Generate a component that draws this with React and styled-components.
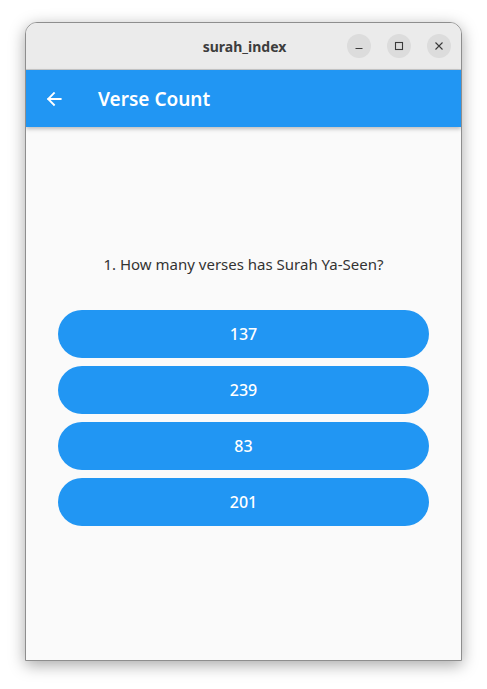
import styled, { createGlobalStyle } from "styled-components";

const GlobalStyle = createGlobalStyle`
  html, body {
    margin: 0;
    padding: 0;
    background: #ffffff;
    font-family: "Noto Sans", "Open Sans", sans-serif;
  }
`;

const answers = ["137", "239", "83", "201"];

function WindowButton({ kind }) {
  return (
    <CircleButton>
      <svg width="10" height="10" viewBox="0 0 10 10" fill="none" stroke="#3a3a3a" strokeWidth="1.1">
        {kind === "min" && <path d="M1.5 7.5h7" />}
        {kind === "max" && <rect x="1.5" y="1.5" width="7" height="7" />}
        {kind === "close" && <path d="M1.5 1.5l7 7M8.5 1.5l-7 7" />}
      </svg>
    </CircleButton>
  );
}

function App() {
  return (
    <>
      <GlobalStyle />
      <Page>
        <Window>
          <TitleBar>
            <WindowTitle>surah_index</WindowTitle>
            <Controls>
              <WindowButton kind="min" />
              <WindowButton kind="max" />
              <WindowButton kind="close" />
            </Controls>
          </TitleBar>
          <AppBar>
            <BackButton>
              <svg width="20" height="20" viewBox="0 0 24 24" fill="none" stroke="#fff" strokeWidth="2.2" strokeLinecap="square">
                <path d="M20 12H5M12 5l-7 7 7 7" />
              </svg>
            </BackButton>
            <AppTitle>Verse Count</AppTitle>
          </AppBar>
          <Body>
            <Question>1. How many verses has Surah Ya-Seen?</Question>
            <Answers>
              {answers.map((a) => (
                <AnswerButton key={a}>{a}</AnswerButton>
              ))}
            </Answers>
          </Body>
        </Window>
      </Page>
    </>
  );
}

const Page = styled.div`
  width: 487px;
  height: 689px;
  padding: 22px 0 0 25px;
  box-sizing: border-box;
`;

const Window = styled.div`
  width: 437px;
  height: 639px;
  box-sizing: border-box;
  border: 1px solid #8e8e8e;
  border-radius: 12px 12px 0 0;
  overflow: hidden;
  display: flex;
  flex-direction: column;
  background: #fafafa;
  box-shadow: 0 4px 16px rgba(0, 0, 0, 0.35);
`;

const TitleBar = styled.div`
  height: 46px;
  flex-shrink: 0;
  background: #ebebeb;
  position: relative;
  display: flex;
  align-items: center;
  justify-content: center;
  border-bottom: 1px solid #c8c8c8;
`;

const WindowTitle = styled.div`
  font-family: "Noto Sans", sans-serif;
  font-weight: 700;
  font-size: 14px;
  color: #3d3d3d;
  margin-left: 2px;
`;

const Controls = styled.div`
  position: absolute;
  right: 10px;
  top: 11px;
  display: flex;
  gap: 16px;
`;

const CircleButton = styled.div`
  width: 24px;
  height: 24px;
  border-radius: 50%;
  background: #dcdcdc;
  display: flex;
  align-items: center;
  justify-content: center;
`;

const AppBar = styled.div`
  height: 57px;
  flex-shrink: 0;
  background: #2196f3;
  display: flex;
  align-items: center;
  padding-left: 18px;
  box-shadow: 0 2px 4px rgba(0, 0, 0, 0.25);
  position: relative;
  z-index: 1;
`;

const BackButton = styled.div`
  width: 20px;
  height: 20px;
  display: flex;
  align-items: center;
  justify-content: center;
`;

const AppTitle = styled.div`
  margin-left: 34px;
  color: #ffffff;
  font-size: 19px;
  font-weight: 600;
`;

const Body = styled.div`
  flex: 1;
  display: flex;
  flex-direction: column;
  align-items: center;
  justify-content: center;
  padding: 0 32px 8px;
`;

const Question = styled.div`
  font-size: 15px;
  color: #333333;
  margin-bottom: 36px;
`;

const Answers = styled.div`
  width: 100%;
  display: flex;
  flex-direction: column;
  gap: 8px;
`;

const AnswerButton = styled.button`
  height: 48px;
  border: none;
  border-radius: 24px;
  background: #2196f3;
  color: #ffffff;
  font-family: "Noto Sans", sans-serif;
  font-size: 16px;
  font-weight: 500;
`;

export default App;
